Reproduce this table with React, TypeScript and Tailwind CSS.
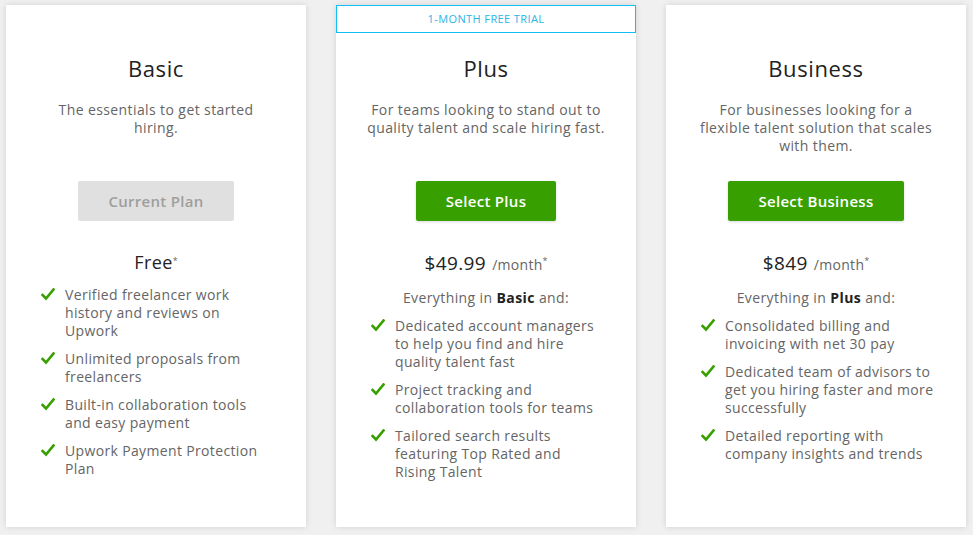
import React from 'react'

type Plan = {
  name: string
  desc: string[]
  button: string
  current?: boolean
  price: string
  per?: boolean
  base?: string
  trial?: boolean
  features: string[][]
}

const plans: Plan[] = [
  {
    name: 'Basic',
    desc: ['The essentials to get started', 'hiring.'],
    button: 'Current Plan',
    current: true,
    price: 'Free',
    features: [
      ['Verified freelancer work', 'history and reviews on', 'Upwork'],
      ['Unlimited proposals from', 'freelancers'],
      ['Built-in collaboration tools', 'and easy payment'],
      ['Upwork Payment Protection', 'Plan'],
    ],
  },
  {
    name: 'Plus',
    desc: ['For teams looking to stand out to', 'quality talent and scale hiring fast.'],
    button: 'Select Plus',
    price: '$49.99',
    per: true,
    base: 'Basic',
    trial: true,
    features: [
      ['Dedicated account managers', 'to help you find and hire', 'quality talent fast'],
      ['Project tracking and', 'collaboration tools for teams'],
      ['Tailored search results', 'featuring Top Rated and', 'Rising Talent'],
    ],
  },
  {
    name: 'Business',
    desc: ['For businesses looking for a', 'flexible talent solution that scales', 'with them.'],
    button: 'Select Business',
    price: '$849',
    per: true,
    base: 'Plus',
    features: [
      ['Consolidated billing and', 'invoicing with net 30 pay'],
      ['Dedicated team of advisors to', 'get you hiring faster and more', 'successfully'],
      ['Detailed reporting with', 'company insights and trends'],
    ],
  },
]

const Check = () => (
  <svg width="14" height="13" viewBox="0 0 14 13" className="shrink-0 mt-[2px]">
    <path d="M1.5 7 L5 10.5 L12.5 1.5" fill="none" stroke="#37a000" strokeWidth="2.6" strokeLinecap="square" />
  </svg>
)

const Lines = ({ lines }: { lines: string[] }) => (
  <>
    {lines.map((l, i) => (
      <React.Fragment key={i}>
        {l}
        {i < lines.length - 1 && <br />}
      </React.Fragment>
    ))}
  </>
)

const PlanCard = ({ plan }: { plan: Plan }) => {
  return (
    <div className="relative w-[300px] h-[522px] bg-white shadow-[0_0_6px_rgba(0,0,0,0.13)] flex flex-col items-center pt-[49px]">
      {/* Trial banner */}
      {plan.trial && (
        <div className="absolute top-0 left-0 right-0 h-[28px] border border-[#14bdf5] flex items-center justify-center text-[11px] tracking-[0.4px] text-[#2ab4e6]">
          1-MONTH FREE TRIAL
        </div>
      )}
      <h2 className="text-[22px] leading-[28px] tracking-[0.6px] text-[#222]">{plan.name}</h2>
      <p className="mt-[19px] h-[54px] text-center text-[14px] leading-[18px] tracking-[0.4px] text-[#656565]">
        <Lines lines={plan.desc} />
      </p>
      <button
        className={
          plan.current
            ? 'mt-[26px] h-[40px] px-[30px] rounded-[2px] bg-[#e0e0e0] text-[#9e9e9e] text-[15px] tracking-[0.3px] font-semibold'
            : 'mt-[26px] h-[40px] px-[30px] rounded-[2px] bg-[#37a000] text-white text-[15px] tracking-[0.3px] font-semibold shadow-[0_1px_3px_rgba(0,0,0,0.15)]'
        }
      >
        {plan.button}
      </button>
      {/* Price */}
      <div className="mt-[28px] h-[24px] flex items-baseline text-[#222]">
        <span className={plan.per ? 'text-[19px] font-medium tracking-[0.4px]' : 'text-[18px] tracking-[0.4px]'}>{plan.price}</span>
        {plan.per && <span className="ml-[6px] text-[14px] tracking-[0.3px] text-[#656565]">/month</span>}
        <span className="text-[9px] text-[#656565] self-start mt-[5px]">*</span>
      </div>
      {plan.base && (
        <p className="mt-[16px] text-[14px] leading-[18px] tracking-[0.4px] text-[#656565]">
          Everything in <b className="text-[#222] font-bold">{plan.base}</b> and:
        </p>
      )}
      <ul className={plan.base ? 'mt-[10px] w-full pl-[35px] flex flex-col gap-[10px]' : 'mt-[13px] w-full pl-[35px] flex flex-col gap-[10px]'}>
        {plan.features.map((f, i) => (
          <li key={i} className="flex gap-[10px]">
            <Check />
            <span className="text-[14px] leading-[18px] tracking-[0.35px] text-[#656565]">
              <Lines lines={f} />
            </span>
          </li>
        ))}
      </ul>
    </div>
  )
}

export default function App() {
  return (
    <div
      className="w-[973px] h-[535px] bg-[#f0f0f0] pt-[5px] pl-[6px] flex gap-[30px] overflow-hidden"
      style={{ fontFamily: '"Open Sans", sans-serif' }}
    >
      {plans.map((p) => (
        <PlanCard key={p.name} plan={p} />
      ))}
    </div>
  )
}
